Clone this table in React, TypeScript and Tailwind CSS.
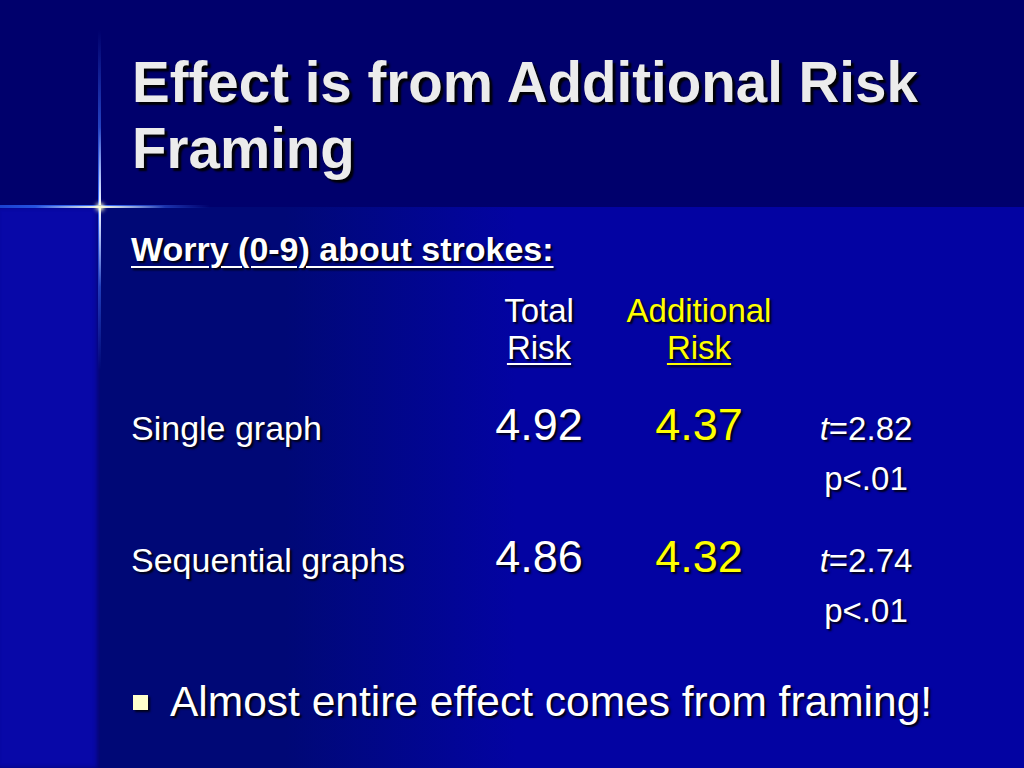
import React from 'react';

const shadow = '[text-shadow:2px_2px_2px_rgba(0,0,0,0.9)]';

const Row = ({ label, total, extra, t, p }: { label: string; total: string; extra: string; t: string; p: string }) => (
  <div className="grid grid-cols-[338px_140px_180px_154px] items-baseline">
    <div className={`text-[34px] leading-[52px] text-white ${shadow}`}>{label}</div>
    <div className={`text-center text-[45px] leading-[52px] text-white ${shadow}`}>{total}</div>
    <div className={`text-center text-[45px] leading-[52px] text-[#ffff00] ${shadow}`}>{extra}</div>
    <div className={`flex flex-col items-center text-[33px] leading-[50px] text-white ${shadow}`}>
      <span>
        <i>t</i>={t}
      </span>
      <span>{p}</span>
    </div>
  </div>
);

export default function App() {
  return (
    <div className="relative flex h-[768px] w-[1024px] flex-col overflow-hidden font-['Liberation_Sans',Arial,sans-serif]">
      <div className="h-[207px] bg-[#00006c] pl-[132px] pt-[50px]">
        <h1 className="text-[56.5px] font-bold leading-[66px] text-[#ececec] [text-shadow:3px_3px_2px_rgba(0,0,0,0.95)]">
          Effect is from Additional Risk
          <br />
          Framing
        </h1>
      </div>

      <div className="flex flex-1">
        <div className="w-[100px] bg-[#0808a8] shadow-[inset_-3px_0_4px_rgba(0,0,60,0.5)]" />
        <div className="flex-1 bg-gradient-to-r from-[#000876] from-20% to-[#0303a2] to-45% pl-[31px]">
          <div className={`mt-[22px] text-[34px] font-bold leading-[40px] text-white underline decoration-2 underline-offset-[5px] ${shadow}`}>
            Worry (0-9) about strokes:
          </div>

          <div className="mt-[23px] grid grid-cols-[338px_140px_180px_154px] text-[33px] leading-[37px]">
            <div />
            <div className={`flex flex-col items-center text-white ${shadow}`}>
              <span>Total</span>
              <span className="underline decoration-2 underline-offset-[4px]">Risk</span>
            </div>
            <div className={`flex flex-col items-center text-[#ffff00] ${shadow}`}>
              <span>Additional</span>
              <span className="underline decoration-2 underline-offset-[4px]">Risk</span>
            </div>
            <div />
          </div>

          <div className="mt-[33px]">
            <Row label="Single graph" total="4.92" extra="4.37" t="2.82" p="p<.01" />
          </div>
          <div className="mt-[27px]">
            <Row label="Sequential graphs" total="4.86" extra="4.32" t="2.74" p="p<.01" />
          </div>

          <div className="mt-[42px] flex items-center">
            <span className="ml-[2px] h-[15px] w-[15px] bg-[#ffffcc] shadow-[2px_2px_2px_rgba(0,0,0,0.8)]" />
            <span className={`ml-[22px] text-[42.5px] leading-[48px] text-white ${shadow}`}>
              Almost entire effect comes from framing!
            </span>
          </div>
        </div>
      </div>

      {/* glowing cross lines */}
      <div className="pointer-events-none absolute left-[98px] top-[30px] h-[340px] w-[3px] bg-gradient-to-b from-transparent via-[#3f73ff] to-transparent" />
      <div className="pointer-events-none absolute left-[99px] top-[127px] h-[160px] w-[2px] bg-gradient-to-b from-transparent via-[#f6f8ff] to-transparent" />
      <div className="pointer-events-none absolute left-0 top-[205px] h-[3px] w-[210px] bg-gradient-to-r from-[#1a40d0] via-[#3f73ff] via-50% to-transparent" />
      <div className="pointer-events-none absolute left-[35px] top-[206px] h-[2px] w-[130px] bg-gradient-to-r from-transparent via-[#f6f6e0] to-transparent" />
      <div className="pointer-events-none absolute left-[96px] top-[203px] h-[8px] w-[8px] rounded-full bg-[#ffffd0] blur-[2px]" />
    </div>
  );
}
